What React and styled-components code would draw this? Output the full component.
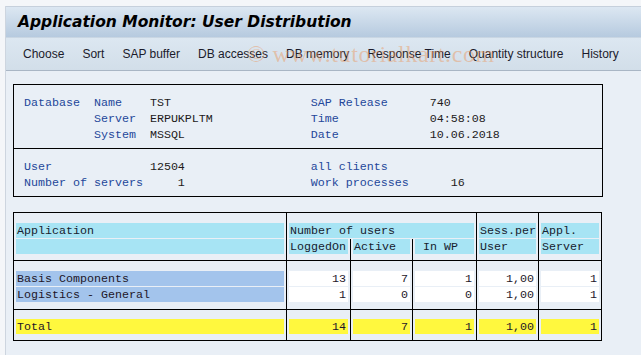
import React from 'react';
import styled, { createGlobalStyle } from 'styled-components';

const GlobalStyle = createGlobalStyle`
  html, body {
    margin: 0;
    padding: 0;
    background: #f4f6f9;
  }
  body {
    width: 641px;
    height: 355px;
    overflow: hidden;
  }
`;

const Screen = styled.div`
  height: 355px;
  padding-top: 6px;
  box-sizing: border-box;
  display: flex;
  background: #f4f6f9;
`;

const Gutter = styled.div`
  flex: none;
  width: 5px;
  border-right: 1px solid #cdd5df;
`;

const Main = styled.div`
  flex: 1;
  display: flex;
  flex-direction: column;
  background: #e9eff6;
  border-top: 1px solid #c6d0dc;
`;

const TitleBar = styled.div`
  height: 30px;
  padding-left: 12px;
  display: flex;
  align-items: center;
  background: linear-gradient(#dce7f2, #b6cadf);
  font-family: 'DejaVu Sans', 'Liberation Sans', sans-serif;
  font-size: 15.5px;
  font-weight: bold;
  font-style: italic;
  color: #000;
`;

const Toolbar = styled.div`
  position: relative;
  height: 32px;
  padding-left: 17px;
  display: flex;
  align-items: center;
  gap: 18px;
  background: linear-gradient(#dce7f1, #d2dee9);
  border-top: 1px solid #c9d6e3;
  border-bottom: 1px solid #a9b6c5;
  font-family: 'Liberation Sans', Arial, sans-serif;
  font-size: 12px;
  color: #1b1b2b;
`;

const ToolItem = styled.span`
  white-space: nowrap;
`;

const Watermark = styled.span`
  position: absolute;
  left: 241px;
  top: 3px;
  font-family: 'Liberation Serif', serif;
  font-size: 24px;
  color: rgba(236, 150, 90, 0.45);
  letter-spacing: 0.6px;
  pointer-events: none;
  white-space: nowrap;
`;

const Content = styled.div`
  padding: 13px 0 0 7px;
  font-family: 'Liberation Mono', 'Courier New', monospace;
  font-size: 11.67px;
`;

const InfoBox = styled.div`
  width: 590px;
  box-sizing: border-box;
  border: 1px solid #000;
`;

const InfoSection = styled.div`
  padding: 10px 0 5px 10px;
  border-top: ${(p) => (p.$divided ? '1px solid #000' : 'none')};
`;

const InfoRow = styled.div`
  display: grid;
  grid-template-columns: 10ch 8ch 23ch 17ch auto;
  height: 16px;
  line-height: 17px;
  white-space: pre;
`;

const Label = styled.span`
  color: #24479a;
`;

const Value = styled.span`
  color: #221a1a;
  ${(p) => p.$right && 'display: inline-block; width: 5ch; text-align: right;'}
`;

const Table = styled.div`
  margin-top: 15px;
  width: 589px;
  box-sizing: border-box;
  border: 1px solid #000;
`;

const Group = styled.div`
  display: grid;
  grid-template-columns: 272px 64px 62px 64px 62px 63px;
  border-top: ${(p) => (p.$first ? 'none' : '1px solid #000')};
`;

const Col = styled.div`
  grid-column: span ${(p) => p.$span || 1};
  border-left: ${(p) => (p.$first ? 'none' : '1px solid #000')};
  padding-top: ${(p) => p.$top}px;
  padding-bottom: ${(p) => p.$bottom}px;
`;

const SubGrid = styled.div`
  display: grid;
  grid-template-columns: 63px 62px 64px;
`;

const SubCol = styled.div`
  border-left: ${(p) => (p.$first ? 'none' : '1px solid #000')};
  padding-bottom: ${(p) => p.$bottom}px;
`;

const tones = {
  head: '#a7e4f4',
  key: '#a3c4ec',
  plain: '#ffffff',
  total: '#fff83e',
};

const Cell = styled.div`
  height: 15px;
  margin: 0 2px 1px 2px;
  padding: 0 ${(p) => (p.$num ? '2px' : '1px')} 0 1px;
  line-height: 16px;
  background: ${(p) => tones[p.$tone]};
  color: ${(p) => (p.$tone === 'head' ? '#16212e' : '#1e1628')};
  text-align: ${(p) => (p.$num ? 'right' : 'left')};
  white-space: pre;
`;

const rows = [
  { app: 'Basis Components', vals: ['13', '7', '1', '1,00', '1'] },
  { app: 'Logistics - General', vals: ['1', '0', '0', '1,00', '1'] },
];
const total = ['14', '7', '1', '1,00', '1'];

const menu = [
  'Choose',
  'Sort',
  'SAP buffer',
  'DB accesses',
  'DB memory',
  'Response Time',
  'Quantity structure',
  'History',
];

export default function App() {
  return (
    <>
      <GlobalStyle />
      <Screen>
        <Gutter />
        <Main>
          <TitleBar>Application Monitor: User Distribution</TitleBar>
          <Toolbar>
            {menu.map((m) => (
              <ToolItem key={m}>{m}</ToolItem>
            ))}
            <Watermark>© www.tutorialkart.com</Watermark>
          </Toolbar>
          <Content>
            <InfoBox>
              <InfoSection>
                <InfoRow>
                  <Label>Database</Label>
                  <Label>Name</Label>
                  <Value>TST</Value>
                  <Label>SAP Release</Label>
                  <Value>740</Value>
                </InfoRow>
                <InfoRow>
                  <span />
                  <Label>Server</Label>
                  <Value>ERPUKPLTM</Value>
                  <Label>Time</Label>
                  <Value>04:58:08</Value>
                </InfoRow>
                <InfoRow>
                  <span />
                  <Label>System</Label>
                  <Value>MSSQL</Value>
                  <Label>Date</Label>
                  <Value>10.06.2018</Value>
                </InfoRow>
              </InfoSection>
              <InfoSection $divided>
                <InfoRow>
                  <Label>User</Label>
                  <span />
                  <span>
                    <Value $right>12504</Value>
                  </span>
                  <Label>all clients</Label>
                  <span />
                </InfoRow>
                <InfoRow>
                  <Label>Number of servers</Label>
                  <span />
                  <span>
                    <Value $right>1</Value>
                  </span>
                  <Label>Work processes</Label>
                  <span>
                    <Value $right>16</Value>
                  </span>
                </InfoRow>
              </InfoSection>
            </InfoBox>

            <Table>
              <Group $first>
                <Col $first $top={10} $bottom={5}>
                  <Cell $tone="head">Application</Cell>
                  <Cell $tone="head" />
                </Col>
                <Col $span={3} $top={10} $bottom={0}>
                  <Cell $tone="head">Number of users</Cell>
                  <SubGrid>
                    <SubCol $first $bottom={5}>
                      <Cell $tone="head">LoggedOn</Cell>
                    </SubCol>
                    <SubCol $bottom={5}>
                      <Cell $tone="head">Active</Cell>
                    </SubCol>
                    <SubCol $bottom={5}>
                      <Cell $tone="head"> In WP</Cell>
                    </SubCol>
                  </SubGrid>
                </Col>
                <Col $top={10} $bottom={5}>
                  <Cell $tone="head">Sess.per</Cell>
                  <Cell $tone="head">User</Cell>
                </Col>
                <Col $top={10} $bottom={5}>
                  <Cell $tone="head">Appl.</Cell>
                  <Cell $tone="head">Server</Cell>
                </Col>
              </Group>

              <Group>
                <Col $first $top={10} $bottom={6}>
                  {rows.map((r) => (
                    <Cell key={r.app} $tone="key">
                      {r.app}
                    </Cell>
                  ))}
                </Col>
                {[0, 1, 2, 3, 4].map((i) => (
                  <Col key={i} $top={10} $bottom={6}>
                    {rows.map((r) => (
                      <Cell key={r.app} $tone="plain" $num>
                        {r.vals[i]}
                      </Cell>
                    ))}
                  </Col>
                ))}
              </Group>

              <Group>
                <Col $first $top={9} $bottom={5}>
                  <Cell $tone="total">Total</Cell>
                </Col>
                {total.map((v, i) => (
                  <Col key={i} $top={9} $bottom={5}>
                    <Cell $tone="total" $num>
                      {v}
                    </Cell>
                  </Col>
                ))}
              </Group>
            </Table>
          </Content>
        </Main>
      </Screen>
    </>
  );
}
